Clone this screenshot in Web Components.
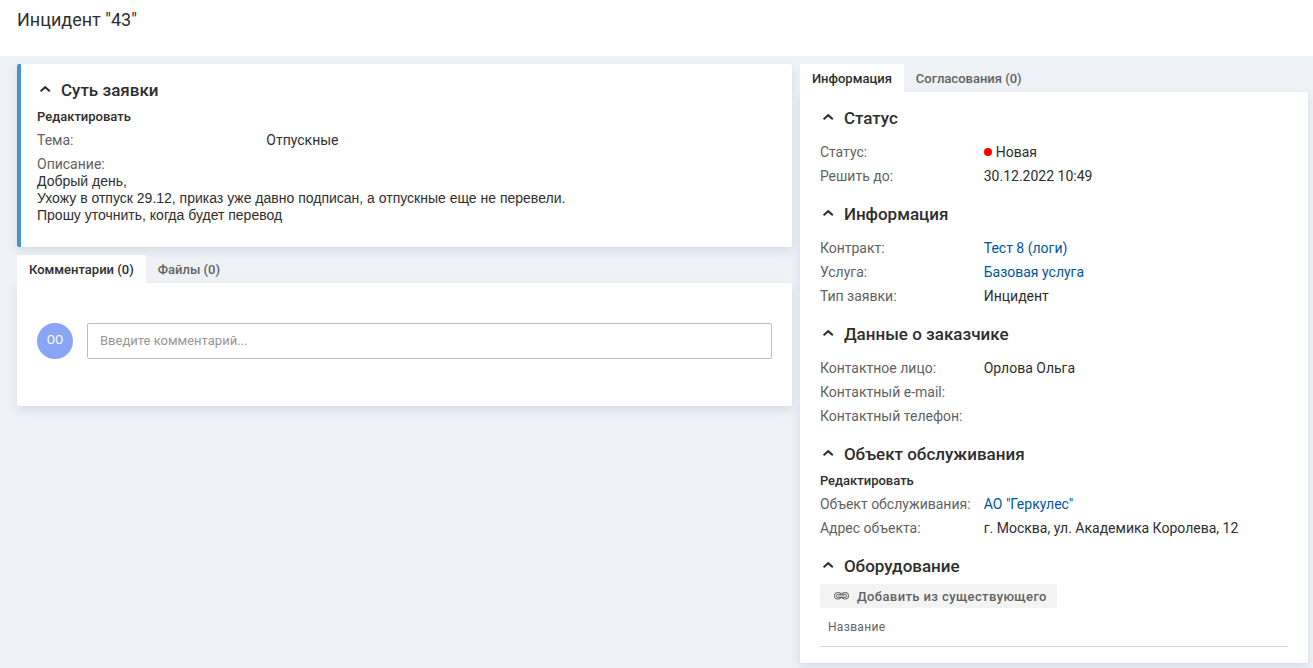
<!DOCTYPE html>
<html lang="ru">
<head>
<meta charset="utf-8">
<meta name="viewport" content="width=device-width, initial-scale=1">
<title>Инцидент "43"</title>
<style>
  :root {
    --text: #2e2e2e;
    --muted: #626262;
    --link: #00559f;
    --page: #eef2f7;
    --card-shadow: 0 4px 10px rgba(70, 95, 125, .15);
  }
  html, body { min-height: 100%; }
  body { margin: 0; background: var(--page); color: var(--text); font: 14px/24px Roboto, "Liberation Sans", sans-serif; }
</style>
</head>
<body>
<ticket-page></ticket-page>
<script>
  class BaseElement extends HTMLElement {
    constructor() {
      super();
      this.attachShadow({ mode: 'open' }).innerHTML = this.render();
    }
    render() { return ''; }
  }

  /* Top bar with the title of the ticket */
  class PageHeader extends BaseElement {
    render() {
      return `<style>
        :host { display: block; background: #fff; padding: 8px 17px 24px; }
        h1 { margin: 0; font-size: 18px; line-height: 24px; font-weight: 400; }
      </style><h1><slot></slot></h1>`;
    }
  }

  /* White card; the "accent" attribute adds a blue stripe at its left edge */
  class SurfaceCard extends BaseElement {
    render() {
      return `<style>
        :host { display: block; background: #fff; padding: 0 20px; border-radius: 2px; box-shadow: var(--card-shadow); }
        :host([accent]) { border-left: 4px solid #4b93cb; padding-left: 16px; padding-bottom: 23px; }
        :host([tabbed]) { border-top-left-radius: 0; }
      </style><slot></slot>`;
    }
  }

  class TabBar extends BaseElement {
    render() {
      return `<style>
        :host { display: flex; }
      </style><slot></slot>`;
    }
    connectedCallback() { this.setAttribute('role', 'tablist'); }
  }

  class TabItem extends BaseElement {
    render() {
      return `<style>
        :host { display: block; }
        button { display: block; margin: 0; border: 0; padding: 2px 12px 0; background: none; border-radius: 2px 2px 0 0;
          font: 500 13px/26px Roboto, "Liberation Sans", sans-serif; color: var(--muted); cursor: pointer; white-space: nowrap; }
        :host([selected]) button { background: #fff; color: var(--text); }
      </style><button type="button" role="tab"><slot></slot></button>`;
    }
    connectedCallback() {
      this.shadowRoot.querySelector('button').setAttribute('aria-selected', this.hasAttribute('selected'));
    }
  }

  class TicketSection extends BaseElement {
    render() {
      return `<style>
        :host { display: block; }
        h2 { margin: 0; padding: 16px 0 12px; font-size: 17px; line-height: 20px; font-weight: 500; }
        :host([compact]) h2 { padding-bottom: 8px; }
        button { display: flex; align-items: center; gap: 10px; margin: 0; border: 0; padding: 0 0 0 3px; background: none;
          font: inherit; color: inherit; cursor: pointer; }
        svg { display: block; width: 11px; height: 12px; }
      </style>
      <h2><button type="button" aria-expanded="true">
        <svg viewBox="0 0 11 12" aria-hidden="true"><path d="M.6 7.300 5.200 3.200 9.800 7.300" fill="none" stroke="#2e2e2e" stroke-width="2"/></svg>
        <span></span>
      </button></h2><slot></slot>`;
    }
    connectedCallback() { this.shadowRoot.querySelector('span').textContent = this.getAttribute('heading'); }
  }

  class EditAction extends BaseElement {
    render() {
      return `<style>
        :host { display: block; padding-bottom: 2px; }
        button { display: block; margin: 0; border: 0; padding: 0; background: none; color: inherit; cursor: pointer;
          font: 500 13px/18px Roboto, "Liberation Sans", sans-serif; }
      </style><button type="button"><slot></slot></button>`;
    }
  }

  class FieldRow extends BaseElement {
    render() {
      return `<style>
        :host { display: grid; grid-template-columns: var(--label-width, 35%) minmax(0, 1fr); }
        .label { color: var(--muted); white-space: nowrap; }
        ::slotted(a) { color: var(--link); text-decoration: none; }
      </style><div class="label"></div><div><slot></slot></div>`;
    }
    connectedCallback() { this.shadowRoot.querySelector('.label').textContent = this.getAttribute('label'); }
  }

  class StatusDot extends BaseElement {
    render() {
      return `<style>
        :host { display: inline-block; width: 8px; height: 8px; margin: 0 4px 1px 0; border-radius: 50%; background: #f00; }
      </style>`;
    }
  }

  class TicketDescription extends BaseElement {
    render() {
      return `<style>
        :host { display: block; padding-top: 4px; line-height: 17px; }
        .label { color: var(--muted); }
        .body { font-family: "Liberation Sans", Arial, sans-serif; white-space: pre-line; }
      </style><div class="label">Описание:</div><div class="body"><slot></slot></div>`;
    }
  }

  class CommentBox extends BaseElement {
    render() {
      return `<style>
        :host { display: flex; gap: 14px; padding: 40px 0 47px; }
        .avatar { flex: none; width: 36px; height: 36px; border-radius: 50%; background: #8ba5f5; color: #fff;
          font-size: 12px; line-height: 34px; text-align: center; }
        input { flex: 1; min-width: 0; height: 36px; box-sizing: border-box; margin: 0; padding: 0 12px 2px; border: 1px solid #bdbdbd;
          border-radius: 2px; background: #fff; color: var(--text); font: 13px Roboto, "Liberation Sans", sans-serif; }
        input::placeholder { color: #969696; opacity: 1; }
      </style>
      <div class="avatar">OO</div>
      <input type="text" aria-label="Комментарий" placeholder="Введите комментарий...">`;
    }
  }

  class LinkButton extends BaseElement {
    render() {
      return `<style>
        :host { display: block; }
        button { display: flex; align-items: center; gap: 8px; height: 24px; margin: 0; border: 0; border-radius: 2px;
          padding: 0 10px 0 14px; background: #f3f3f3; color: var(--muted); cursor: pointer;
          font: 500 13px/24px Roboto, "Liberation Sans", sans-serif; letter-spacing: 0.03em; }
        svg { display: block; width: 15px; height: 8px; }
        span { padding-top: 2px; }
      </style>
      <button type="button">
        <svg viewBox="0 0 15 8" aria-hidden="true" fill="none" stroke="#555">
          <rect x=".5" y=".5" width="7" height="6.500" rx="3"/>
          <rect x="7.500" y=".5" width="7" height="6.500" rx="3"/>
          <rect x="2.500" y="2.300" width="10" height="3" rx="1.500" fill="#f3f3f3" stroke-width=".9"/>
          <path d="M4.500 3.800h6" stroke-width=".6"/>
        </svg>
        <span><slot></slot></span>
      </button>`;
    }
  }

  class EquipmentTable extends BaseElement {
    render() {
      return `<style>
        :host { display: block; padding-bottom: 16px; }
        table { width: 100%; border-collapse: collapse; }
        th { height: 38px; padding: 0 8px; border-bottom: 1px solid #d6d6d6; color: var(--muted); text-align: left;
          font-size: 12px; line-height: 16px; font-weight: 400; letter-spacing: 0.03em; }
      </style><table><thead><tr><th scope="col">Название</th></tr></thead></table>`;
    }
  }

  class TicketPage extends BaseElement {
    render() {
      return `<style>
        :host { display: block; }
        main { display: grid; grid-template-columns: minmax(0, 61fr) minmax(0, 40fr); gap: 8px; align-items: start; padding: 8px 5px 5px 17px; }
        .left { display: grid; gap: 8px; --label-width: 31.2%; }
      </style>
      <page-header>Инцидент "43"</page-header>
      <main>
        <div class="left">
          <surface-card accent>
            <ticket-section heading="Суть заявки" compact>
              <edit-action>Редактировать</edit-action>
              <field-row label="Тема:">Отпускные</field-row>
              <ticket-description>Добрый день,<br>Ухожу в отпуск 29.12, приказ уже давно подписан, а отпускные еще не перевели.<br>Прошу уточнить, когда будет перевод</ticket-description>
            </ticket-section>
          </surface-card>
          <section>
            <tab-bar><tab-item selected>Комментарии (0)</tab-item><tab-item>Файлы (0)</tab-item></tab-bar>
            <surface-card tabbed><comment-box></comment-box></surface-card>
          </section>
        </div>
        <section>
          <tab-bar><tab-item selected>Информация</tab-item><tab-item>Согласования (0)</tab-item></tab-bar>
          <surface-card tabbed>
            <ticket-section heading="Статус">
              <field-row label="Статус:"><status-dot></status-dot>Новая</field-row>
              <field-row label="Решить до:">30.12.2022 10:49</field-row>
            </ticket-section>
            <ticket-section heading="Информация">
              <field-row label="Контракт:"><a href="#contract">Тест 8 (логи)</a></field-row>
              <field-row label="Услуга:"><a href="#service">Базовая услуга</a></field-row>
              <field-row label="Тип заявки:">Инцидент</field-row>
            </ticket-section>
            <ticket-section heading="Данные о заказчике">
              <field-row label="Контактное лицо:">Орлова Ольга</field-row>
              <field-row label="Контактный e-mail:"></field-row>
              <field-row label="Контактный телефон:"></field-row>
            </ticket-section>
            <ticket-section heading="Объект обслуживания" compact>
              <edit-action>Редактировать</edit-action>
              <field-row label="Объект обслуживания:"><a href="#object">АО "Геркулес"</a></field-row>
              <field-row label="Адрес объекта:">г. Москва, ул. Академика Королева, 12</field-row>
            </ticket-section>
            <ticket-section heading="Оборудование" compact>
              <link-button>Добавить из существующего</link-button>
              <equipment-table></equipment-table>
            </ticket-section>
          </surface-card>
        </section>
      </main>`;
    }
  }

  customElements.define('page-header', PageHeader);
  customElements.define('surface-card', SurfaceCard);
  customElements.define('tab-bar', TabBar);
  customElements.define('tab-item', TabItem);
  customElements.define('ticket-section', TicketSection);
  customElements.define('edit-action', EditAction);
  customElements.define('field-row', FieldRow);
  customElements.define('status-dot', StatusDot);
  customElements.define('ticket-description', TicketDescription);
  customElements.define('comment-box', CommentBox);
  customElements.define('link-button', LinkButton);
  customElements.define('equipment-table', EquipmentTable);
  customElements.define('ticket-page', TicketPage);
</script>
</body>
</html>
